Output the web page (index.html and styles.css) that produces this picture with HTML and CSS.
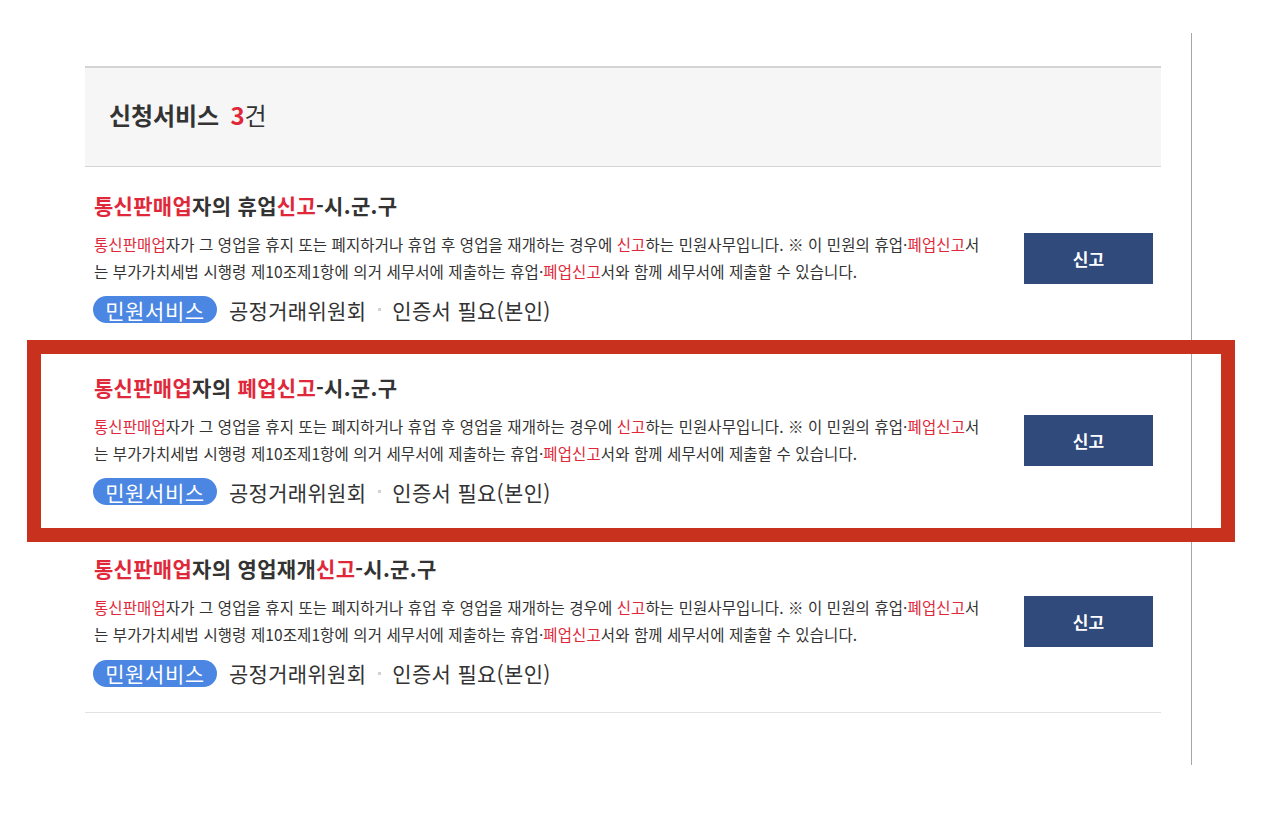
FILE: index.html
```html
<!DOCTYPE html>
<html lang="ko">
<head>
<meta charset="utf-8">
<title>신청서비스</title>
<link rel="stylesheet" href="styles.css">
</head>
<body>
<div class="page">
  <section class="svc">
    <div class="svc-head">
      <h2 class="svc-title">신청서비스 <span class="count"><em>3</em>건</span></h2>
    </div>
    <ul class="svc-list">
      <li class="item">
        <div class="info">
          <h3 class="item-title"><span class="hl">통신판매업</span>자의 휴업<span class="hl">신고</span>-시.군.구</h3>
          <p class="desc"><span class="hl">통신판매업</span>자가 그 영업을 휴지 또는 폐지하거나 휴업 후 영업을 재개하는 경우에 <span class="hl">신고</span>하는 민원사무입니다. ※ 이 민원의 휴업·<span class="hl">폐업신고</span>서는 부가가치세법 시행령 제10조제1항에 의거 세무서에 제출하는 휴업·<span class="hl">폐업신고</span>서와 함께 세무서에 제출할 수 있습니다.</p>
          <div class="meta"><span class="tag">민원서비스</span><span class="org">공정거래위원회</span><span class="sep"></span><span class="cert">인증서 필요(본인)</span></div>
        </div>
        <button class="btn" type="button">신고</button>
      </li>
      <li class="item focus">
        <div class="info">
          <h3 class="item-title"><span class="hl">통신판매업</span>자의 <span class="hl">폐업신고</span>-시.군.구</h3>
          <p class="desc"><span class="hl">통신판매업</span>자가 그 영업을 휴지 또는 폐지하거나 휴업 후 영업을 재개하는 경우에 <span class="hl">신고</span>하는 민원사무입니다. ※ 이 민원의 휴업·<span class="hl">폐업신고</span>서는 부가가치세법 시행령 제10조제1항에 의거 세무서에 제출하는 휴업·<span class="hl">폐업신고</span>서와 함께 세무서에 제출할 수 있습니다.</p>
          <div class="meta"><span class="tag">민원서비스</span><span class="org">공정거래위원회</span><span class="sep"></span><span class="cert">인증서 필요(본인)</span></div>
        </div>
        <button class="btn" type="button">신고</button>
        <span class="marker"></span>
      </li>
      <li class="item last">
        <div class="info">
          <h3 class="item-title"><span class="hl">통신판매업</span>자의 영업재개<span class="hl">신고</span>-시.군.구</h3>
          <p class="desc"><span class="hl">통신판매업</span>자가 그 영업을 휴지 또는 폐지하거나 휴업 후 영업을 재개하는 경우에 <span class="hl">신고</span>하는 민원사무입니다. ※ 이 민원의 휴업·<span class="hl">폐업신고</span>서는 부가가치세법 시행령 제10조제1항에 의거 세무서에 제출하는 휴업·<span class="hl">폐업신고</span>서와 함께 세무서에 제출할 수 있습니다.</p>
          <div class="meta"><span class="tag">민원서비스</span><span class="org">공정거래위원회</span><span class="sep"></span><span class="cert">인증서 필요(본인)</span></div>
        </div>
        <button class="btn" type="button">신고</button>
      </li>
    </ul>
  </section>
</div>
</body>
</html>
```

FILE: styles.css
```css
* { box-sizing: border-box; }
html, body { margin: 0; padding: 0; background: #fff; }
body {
  font-family: "Noto Sans CJK KR", "Noto Sans", sans-serif;
  color: #333;
}
.page {
  margin-top: 33px;
  width: 1192px;
  height: 732px;
  padding: 33px 30px 0 85px;
  border-right: 1px solid #a6a6a6;
}
.svc { width: 1076px; }
.svc-head {
  height: 101px;
  background: #f6f6f6;
  border-top: 2px solid #d4d4d4;
  border-bottom: 1px solid #d4d4d4;
  display: flex;
  align-items: center;
  padding: 0 0 6px 24px;
}
.svc-title {
  margin: 0;
  font-size: 24px;
  font-weight: 700;
  letter-spacing: -0.1px;
  color: #333;
}
.count { font-weight: 400; margin-left: 5px; }
.count em { font-style: normal; font-weight: 700; color: #e0283a; }
.svc-list { list-style: none; margin: 0; padding: 0; }
.item {
  position: relative;
  height: 182px;
  display: flex;
  align-items: center;
  padding: 0 8px 0 9px;
}
.item.last { border-bottom: 1px solid #e2e2e2; }
.info { width: 892px; padding-bottom: 2px; }
.item-title {
  margin: 0;
  font-size: 21px;
  line-height: 30px;
  font-weight: 700;
  letter-spacing: 0.3px;
  color: #333;
}
.hl { color: #e0283a; }
.desc {
  margin: 11px 0 0;
  font-size: 15.5px;
  line-height: 27px;
  letter-spacing: 0.1px;
  color: #333;
}
.meta {
  display: flex;
  align-items: center;
  margin-top: 10px;
  font-size: 21px;
  letter-spacing: 0.3px;
  color: #333;
}
.tag {
  display: inline-flex;
  align-items: center;
  justify-content: center;
  height: 27px;
  width: 124px;
  border-radius: 14px;
  background: #4a86e2;
  color: #fff;
  font-size: 21px;
  letter-spacing: 0.6px;
  margin: 0 12px 0 -1px;
}
.sep {
  display: inline-block;
  width: 3px;
  height: 3px;
  background: #d2d2d2;
  margin: 0 11px 0 12px;
}
.btn {
  margin-left: auto;
  width: 129px;
  height: 51px;
  border: 0;
  background: #2f4a7b;
  color: #fff;
  font-family: inherit;
  font-size: 17px;
  font-weight: 700;
  cursor: pointer;
}
.marker {
  position: absolute;
  left: -58px;
  right: -74px;
  top: -9px;
  bottom: -11px;
  border: 14px solid #c9311f;
  pointer-events: none;
}
```
